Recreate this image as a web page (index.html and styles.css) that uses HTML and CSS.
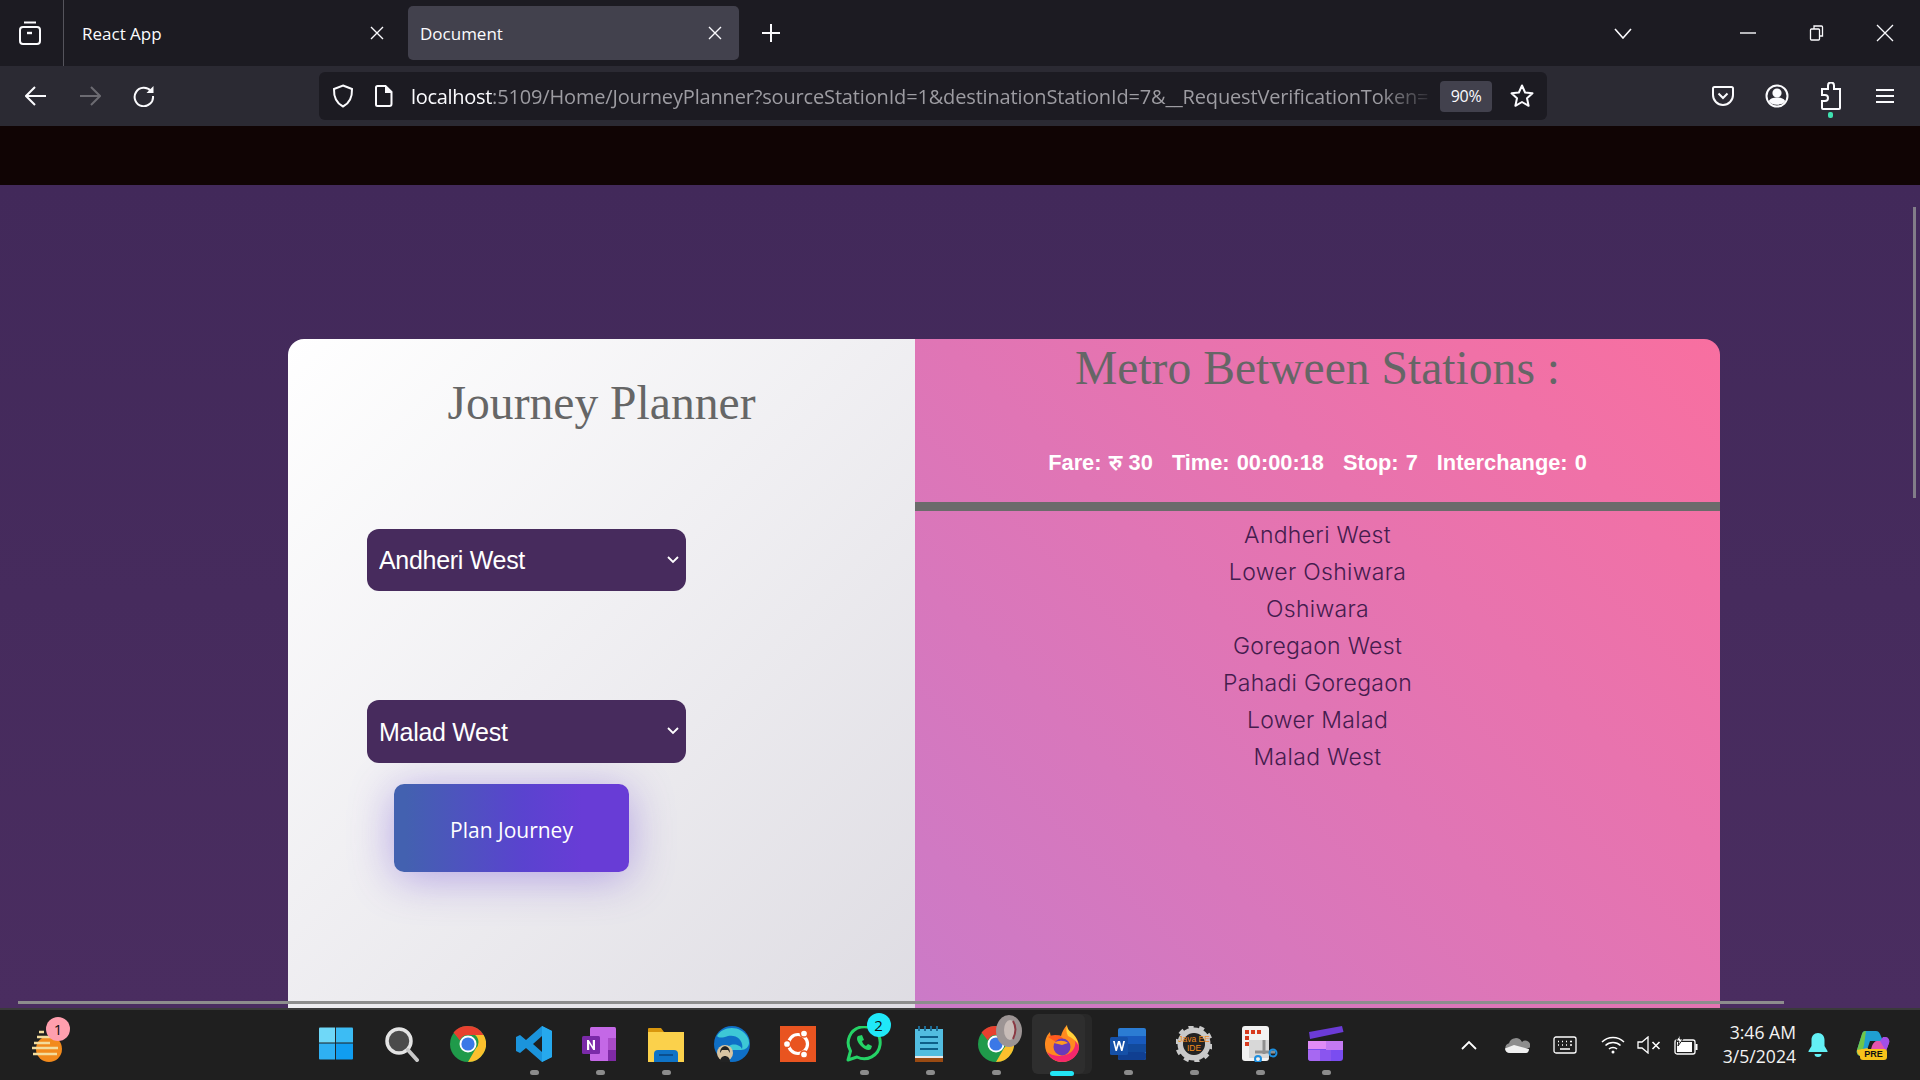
FILE: index.html
```html
<!DOCTYPE html>
<html lang="en">
<head>
    <meta charset="UTF-8">
    <title>Document</title>
    <link rel="stylesheet" href="styles.css">
</head>
<body>
    <!-- browser tabs -->
    <div class="tabstrip">
        <div class="slot tab-list">
            <svg width="24" height="26" viewBox="0 0 24 26" fill="none" stroke="#fbfbfe" stroke-width="2"><path d="M6 2.5h12"/><rect x="2" y="7" width="20" height="17" rx="3"/><path d="M9 13h5" stroke-width="2.4"/></svg>
        </div>
        <div class="tab tab-first">
            <span class="tab-title">React App</span>
            <svg class="tab-close" width="14" height="14" viewBox="0 0 14 14" stroke="#fbfbfe" stroke-width="1.4"><path d="M1 1l12 12M13 1L1 13"/></svg>
        </div>
        <div class="tab tab-active">
            <span class="tab-title">Document</span>
            <svg class="tab-close" width="14" height="14" viewBox="0 0 14 14" stroke="#fbfbfe" stroke-width="1.4"><path d="M1 1l12 12M13 1L1 13"/></svg>
        </div>
        <div class="slot new-tab">
            <svg width="18" height="18" viewBox="0 0 18 18" stroke="#fbfbfe" stroke-width="2"><path d="M9 0v18M0 9h18"/></svg>
        </div>
        <div class="slot all-tabs">
            <svg width="18" height="11" viewBox="0 0 18 11" fill="none" stroke="#fbfbfe" stroke-width="1.6"><path d="M1 1l8 9 8-9"/></svg>
        </div>
        <div class="win-btns">
            <div class="slot win-btn"><svg width="16" height="2" viewBox="0 0 16 2"><path d="M0 1h16" stroke="#fbfbfe" stroke-width="1.4"/></svg></div>
            <div class="slot win-btn"><svg width="16" height="16" viewBox="0 0 16 16" fill="none" stroke="#fbfbfe" stroke-width="1.3"><rect x="1.5" y="4" width="9" height="11" rx="1"/><path d="M5 4V1h7.5a1 1 0 0 1 1 1v9h-3"/></svg></div>
            <div class="slot win-btn"><svg width="18" height="18" viewBox="0 0 18 18" stroke="#fbfbfe" stroke-width="1.3"><path d="M1 1l16 16M17 1L1 17"/></svg></div>
        </div>
    </div>

    <!-- toolbar -->
    <div class="toolbar">
        <div class="slot nav-btn"><svg width="22" height="20" viewBox="0 0 22 20" fill="none" stroke="#fbfbfe" stroke-width="2"><path d="M21 10H2M10 1l-9 9 9 9"/></svg></div>
        <div class="slot nav-btn"><svg width="22" height="20" viewBox="0 0 22 20" fill="none" stroke="#6c6b72" stroke-width="2"><path d="M1 10h19M12 1l9 9-9 9"/></svg></div>
        <div class="slot nav-btn"><svg width="22" height="22" viewBox="0 0 22 22" fill="none" stroke="#fbfbfe" stroke-width="2"><path d="M18 6.2A9.2 9.2 0 1 0 20 11"/><path d="M20.5 1v7h-7z" fill="#fbfbfe" stroke="none"/></svg></div>
        <div class="urlbar">
            <svg class="url-shield" width="22" height="24" viewBox="0 0 22 24" fill="none" stroke="#fbfbfe" stroke-width="2"><path d="M11 1.5l9 3.5c.3 8-2 14-9 17.5C4 19 1.7 13 2 5z"/></svg>
            <svg class="url-file" width="18" height="22" viewBox="0 0 18 22" fill="none" stroke="#fbfbfe" stroke-width="2"><path d="M2.5 1h8l6 6v12a2 2 0 0 1-2 2h-12a1.500 1.500 0 0 1-1.500-1.500V2.500A1.500 1.500 0 0 1 2.500 1z"/><path d="M10 1v7h7" fill="#fbfbfe" stroke="none"/></svg>
            <div class="url-text"><span class="url-host">localhost</span>:5109/Home/JourneyPlanner?sourceStationId=1&amp;destinationStationId=7&amp;__RequestVerificationToken=</div>
            <div class="zoom-level">90%</div>
            <svg class="url-star" width="24" height="24" viewBox="0 0 24 24" fill="none" stroke="#fbfbfe" stroke-width="2" stroke-linejoin="round"><path d="M12 1.500l3.100 7 7.400.8-5.500 5 1.600 7.500-6.600-3.800-6.600 3.800 1.600-7.500-5.500-5 7.400-.8z"/></svg>
        </div>
        <div class="tool-icons">
            <div class="slot tool-btn"><svg width="22" height="22" viewBox="0 0 22 22" fill="none" stroke="#fbfbfe" stroke-width="2"><path d="M2.500 2h17A1.500 1.500 0 0 1 21 3.500V10a10 10 0 0 1-20 0V3.500A1.500 1.500 0 0 1 2.500 2z"/><path d="M6.500 8.500L11 13l4.500-4.500"/></svg></div>
            <div class="slot tool-btn"><svg width="24" height="24" viewBox="0 0 24 24" fill="none" stroke="#fbfbfe" stroke-width="2"><circle cx="12" cy="12" r="10.500"/><circle cx="12" cy="9" r="3.600" fill="#fbfbfe"/><path d="M5 17c2-3.500 12-3.500 14 0-2 3.500-12 3.500-14 0z" fill="#fbfbfe"/></svg></div>
            <div class="slot tool-btn ext-btn">
                <svg width="20" height="28" viewBox="0 0 20 28" fill="none" stroke="#fbfbfe" stroke-width="2"><path d="M7 7V3.500a3 3 0 0 1 6 0V7h6v19a1 1 0 0 1-1 1H2a1 1 0 0 1-1-1v-7h3a3 3 0 0 0 0-6H1V7z"/></svg>
                <span class="ext-dot"></span>
            </div>
            <div class="slot tool-btn"><svg width="18" height="16" viewBox="0 0 18 16" stroke="#fbfbfe" stroke-width="2"><path d="M0 2h18M0 8h18M0 14h18"/></svg></div>
        </div>
    </div>

    <div class="topband"></div>

    <!-- page -->
    <div class="page">
        <div class="card">
            <div class="planner">
                <h1 class="planner-title">Journey Planner</h1>
                <form class="planner-form">
                    <div class="select-wrap">
                        <select class="station-select"><option>Andheri West</option></select>
                        <svg class="select-arrow" width="12" height="8" viewBox="0 0 12 8" fill="none" stroke="#fff" stroke-width="1.800"><path d="M1 1l5 5 5-5"/></svg>
                    </div>
                    <div class="select-wrap select-dest">
                        <select class="station-select"><option>Malad West</option></select>
                        <svg class="select-arrow" width="12" height="8" viewBox="0 0 12 8" fill="none" stroke="#fff" stroke-width="1.800"><path d="M1 1l5 5 5-5"/></svg>
                    </div>
                    <button class="plan-btn" type="button">Plan Journey</button>
                </form>
            </div>
            <div class="result">
                <h1 class="result-title">Metro Between Stations :</h1>
                <div class="stats">
                    <span>Fare: रु 30</span>
                    <span>Time: 00:00:18</span>
                    <span>Stop: 7</span>
                    <span>Interchange: 0</span>
                </div>
                <div class="divider"></div>
                <ul class="stations">
                    <li>Andheri West</li>
                    <li>Lower Oshiwara</li>
                    <li>Oshiwara</li>
                    <li>Goregaon West</li>
                    <li>Pahadi Goregaon</li>
                    <li>Lower Malad</li>
                    <li>Malad West</li>
                </ul>
            </div>
        </div>
        <div class="hscroll"></div>
        <div class="vscroll"></div>
    </div>

    <!-- windows taskbar -->
    <div class="taskbar">
        <div class="widget">
            <svg width="40" height="44" viewBox="0 0 40 44"><circle cx="20" cy="28" r="13" fill="#f28a1c"/><path d="M8 16h14M5 22h16M3 27h26M4 33h24M10 11h5" stroke="#f3dc9c" stroke-width="2.400"/></svg>
            <span class="widget-badge">1</span>
        </div>
        <div class="task-icons">
            <div class="task-icon"><svg width="34" height="35" viewBox="0 0 36 36"><path d="M1 1h16v16H0V2a1 1 0 0 1 1-1z" fill="#6fd8f8"/><path d="M18 1h17a1 1 0 0 1 1 1v15H18z" fill="#3cbcf4"/><path d="M0 18h17v17H1a1 1 0 0 1-1-1z" fill="#2fb0f3"/><path d="M18 18h18v16a1 1 0 0 1-1 1H18z" fill="#109df0"/></svg></div>
            <div class="task-icon"><svg width="36" height="36" viewBox="0 0 36 36"><circle cx="15" cy="15" r="12" fill="#4b4b4b" stroke="#e4e4e4" stroke-width="3.500"/><path d="M24 24l9 10" stroke="#c9c9c9" stroke-width="4" stroke-linecap="round"/></svg></div>
            <div class="task-icon"><svg width="36" height="36" viewBox="0 0 36 36"><circle cx="18" cy="18" r="18" fill="#1f9a4a"/><path d="M18 0a18 18 0 0 1 15.600 9H18a9 9 0 0 0-8.200 5.300L3.500 6.500A18 18 0 0 1 18 0z" fill="#e8402f"/><path d="M33.600 9A18 18 0 0 1 18 36l7.800-13.500A9 9 0 0 0 25 9z" fill="#fbc02d"/><circle cx="18" cy="18" r="8.500" fill="#fff"/><circle cx="18" cy="18" r="6.600" fill="#3b78e7"/></svg></div>
            <div class="task-icon has-dot"><svg width="36" height="36" viewBox="0 0 36 36"><path d="M26 0l10 5v26l-10 5-16-14-6 5-4-2V11l4-2 6 5zM26 10l-9 8 9 8z" fill="#1b94dc" fill-rule="evenodd"/><path d="M26 0l10 5v26l-10 5z" fill="#26a9ee"/></svg></div>
            <div class="task-icon has-dot"><svg width="36" height="36" viewBox="0 0 36 36"><rect x="8" y="1" width="26" height="34" rx="1.500" fill="#c468e6"/><rect x="26" y="12" width="8" height="12" fill="#a94bc8"/><rect x="26" y="24" width="8" height="11" fill="#7f2aa5"/><rect x="0" y="10" width="18" height="18" rx="1.500" fill="#7a2aa8"/><path d="M5 24V14h1.800l4 6.500V14H13v10h-1.800l-4-6.500V24z" fill="#fff"/></svg></div>
            <div class="task-icon has-dot"><svg width="36" height="36" viewBox="0 0 36 36"><path d="M0 3a1 1 0 0 1 1-1h12l3 4h-16z" fill="#d9970e"/><rect x="0" y="6" width="36" height="30" fill="#fbd14b"/><path d="M6 36V28a4 4 0 0 1 4-4h16a4 4 0 0 1 4 4v8z" fill="#0f73c6"/><path d="M11 29h14" stroke="#0a4f8f" stroke-width="2"/></svg></div>
            <div class="task-icon"><svg width="36" height="36" viewBox="0 0 36 36"><circle cx="18" cy="18" r="18" fill="#0f6fc6"/><path d="M3 10C8 0 27-2 34 12c3 7-1 12-7 12H12c3-8 14-6 16-1 2-8-5-15-14-13C8 12 5 12 3 10z" fill="#3dc8d6"/><circle cx="11" cy="27" r="8" fill="#d8c4a2"/><path d="M6 36c0-8 10-8 10 0z" fill="#222"/><path d="M6 27c0-9 10-9 10 0l-2-3h-6z" fill="#222"/></svg></div>
            <div class="task-icon"><svg width="36" height="36" viewBox="0 0 36 36"><rect width="36" height="36" fill="#e95420"/><circle cx="18" cy="18" r="9.500" fill="none" stroke="#fff" stroke-width="3.200"/><circle cx="24" cy="7.500" r="3.600" fill="#fff" stroke="#e95420" stroke-width="1.500"/><circle cx="24" cy="28.500" r="3.600" fill="#fff" stroke="#e95420" stroke-width="1.500"/><circle cx="7" cy="18" r="3.600" fill="#fff" stroke="#e95420" stroke-width="1.500"/></svg></div>
            <div class="task-icon has-dot">
                <svg width="36" height="36" viewBox="0 0 36 36" fill="none"><path d="M2 34l2.500-9A16 16 0 1 1 11 31z" stroke="#25d366" stroke-width="3" stroke-linejoin="round"/><path d="M12 10c-2 2-1 6 3 10s8 5 10 3l1-3-4-2-2 2c-2-1-3-2-4-5l2-1-2-5z" fill="#25d366"/></svg>
                <span class="task-badge">2</span>
            </div>
            <div class="task-icon has-dot"><svg width="30" height="36" viewBox="0 0 30 36"><path d="M0 3h28v27H0z" fill="#52bde0"/><path d="M0 30h28v2H0z" fill="#e8e8e8"/><path d="M0 32h28v4H0z" fill="#9a4a12"/><path d="M5 11h18M5 17h18M5 23h18" stroke="#0d5f88" stroke-width="2.200"/><path d="M4 0v5M10 0v5M16 0v5M22 0v5" stroke="#1d6d96" stroke-width="2"/></svg></div>
            <div class="task-icon has-dot">
                <svg width="36" height="36" viewBox="0 0 36 36"><circle cx="18" cy="18" r="18" fill="#1f9a4a"/><path d="M18 0a18 18 0 0 1 15.600 9H18a9 9 0 0 0-8.200 5.300L3.500 6.500A18 18 0 0 1 18 0z" fill="#e8402f"/><path d="M33.600 9A18 18 0 0 1 18 36l7.800-13.500A9 9 0 0 0 25 9z" fill="#fbc02d"/><circle cx="18" cy="18" r="8.500" fill="#fff"/><circle cx="18" cy="18" r="6.600" fill="#3b78e7"/></svg>
                <svg class="avatar" width="26" height="32" viewBox="0 0 26 32"><ellipse cx="13" cy="16" rx="13" ry="16" fill="#9c9494"/><ellipse cx="14" cy="15" rx="6" ry="10" fill="#c8bcb8"/><path d="M17 6c3 5 3 12 0 18" stroke="#8a3a44" stroke-width="2" fill="none"/></svg>
            </div>
            <div class="task-icon task-active">
                <svg width="36" height="38" viewBox="0 0 36 38"><path d="M18 37A17 17 0 0 1 1 20C1 14 3 10 6 7c0 3 1 5 3 6 2-2 5-3 8-2 1-4 3-8 6-11 0 5 3 6 6 9 4 4 6 8 6 13A17 17 0 0 1 18 37z" fill="#ff8a1f"/><path d="M18 37A17 17 0 0 1 3 27c5 5 20 6 26-2 3-4 3-9 1-13 3 3 5 8 5 12A17 17 0 0 1 18 37z" fill="#f5276c"/><path d="M23 0c0 5 3 6 6 9 3 3 5 7 5 11-2-5-6-7-10-9-2-4-2-7-1-11z" fill="#ffd23a"/><path d="M4 12c5-3 13-3 16 3-4-1-6 0-8 2z" fill="#ff5a1f"/><circle cx="18" cy="22" r="8.500" fill="#6a3ab8"/><path d="M10 18c4-3 10-3 14 0l-6 2z" fill="#ff9a1f"/></svg>
                <span class="active-bar"></span>
            </div>
            <div class="task-icon has-dot"><svg width="36" height="36" viewBox="0 0 36 36"><rect x="8" y="2" width="28" height="32" rx="2" fill="#2b7cd3"/><rect x="8" y="10" width="28" height="8" fill="#185abd"/><rect x="8" y="18" width="28" height="8" fill="#124a9c"/><rect x="8" y="26" width="28" height="8" rx="2" fill="#103f91"/><rect x="0" y="11" width="18" height="18" rx="1.500" fill="#1550a8"/><path d="M3 15l2.500 10h1.400L9 18l2.100 7h1.400L15 15h-1.800l-1.300 6.500L10 15H8l-1.900 6.500L4.800 15z" fill="#fff"/></svg></div>
            <div class="task-icon has-dot">
                <svg width="36" height="36" viewBox="0 0 36 36"><circle cx="18" cy="18" r="13.500" fill="none" stroke="#c9c9c9" stroke-width="6"/><circle cx="18" cy="18" r="17" fill="none" stroke="#c9c9c9" stroke-width="4" stroke-dasharray="5 5.600"/><circle cx="18" cy="18" r="11" fill="#222"/><text class="java-label" x="18" y="16" text-anchor="middle">Java EE</text><text class="java-label" x="18" y="25" text-anchor="middle">IDE</text></svg>
            </div>
            <div class="task-icon has-dot"><svg width="36" height="36" viewBox="0 0 36 36"><rect x="0" y="0" width="27" height="35" rx="3" fill="#f2f2f2"/><path d="M3 4h4v4H3zM9 4h4v4H9zM15 4h4v4h-4zM3 10h4v4H3zM3 16h4v4H3z" fill="#d83b1f"/><rect x="7" y="14" width="20" height="18" fill="#d8d8d8"/><path d="M22 14v14M13 26h20" stroke="#8f8f8f" stroke-width="3"/><circle cx="31" cy="27" r="3.500" fill="none" stroke="#1d8fe0" stroke-width="2"/><circle cx="16" cy="33" r="3" fill="none" stroke="#1d8fe0" stroke-width="2"/></svg></div>
            <div class="task-icon has-dot"><svg width="36" height="36" viewBox="0 0 36 36"><path d="M1 6l33-6 1.500 6L2 13z" fill="#6b3bd6"/><path d="M0 15h35v17a3 3 0 0 1-3 3H3a3 3 0 0 1-3-3z" fill="#7a4df0"/><path d="M0 15h18v8h-8v-0H0z" fill="#e08cf6"/><path d="M18 15h17v9H18z" fill="#c47af2"/><path d="M0 24h12v11H3a3 3 0 0 1-3-3z" fill="#a768f2"/><path d="M12 24h11v11H12z" fill="#8a55ef"/></svg></div>
        </div>
        <div class="tray">
            <div class="tray-icon tray-chevron"><svg width="16" height="10" viewBox="0 0 16 10" fill="none" stroke="#fff" stroke-width="1.800"><path d="M1 9l7-7 7 7"/></svg></div>
            <div class="tray-icon tray-cloud"><svg width="25" height="16" viewBox="0 0 25 16"><path d="M5 16a5 5 0 0 1-1-9.800A7 7 0 0 1 17 5a5 5 0 0 1 8 5.500z" fill="#8d8d8d"/><path d="M5 16c-3 0-5-2-5-4.500L9 8l15 4c0 2-1 4-3 4z" fill="#f0f0f0"/></svg></div>
            <div class="tray-icon tray-kbd"><svg width="24" height="18" viewBox="0 0 24 18" fill="none" stroke="#fff" stroke-width="1.300"><rect x="1" y="1" width="22" height="16" rx="2"/><path d="M5 5.500h1M9 5.500h1M13 5.500h1M17 5.500h2M5 9h1M9 9h1M13 9h1M17 9h2M7 13h10" stroke-width="1.600"/></svg></div>
            <div class="tray-icon tray-wifi"><svg width="24" height="18" viewBox="0 0 24 18" fill="none" stroke="#fff" stroke-width="1.500"><path d="M1 6c6-6 16-6 22 0M4.500 9.500c4-4 11-4 15 0M8 13c2-2 6-2 8 0"/><circle cx="12" cy="16" r="1.500" fill="#fff" stroke="none"/></svg></div>
            <div class="tray-icon tray-sound"><svg width="24" height="18" viewBox="0 0 24 18" fill="none" stroke="#fff" stroke-width="1.300"><path d="M1 6v6h4l6 5V1L5 6z"/><path d="M15.500 6l7 7M22.500 6l-7 7" stroke-width="1.600"/></svg></div>
            <div class="tray-icon tray-batt"><svg width="25" height="20" viewBox="0 0 25 20" fill="none" stroke="#fff" stroke-width="1.300"><rect x="1" y="5" width="20" height="14" rx="2"/><path d="M3 17V7h15v10z" fill="#fff" stroke="none"/><path d="M21.500 9h2v6h-2z" fill="#fff" stroke="none"/><path d="M6 0L2 6h3l-1 5 5-7H6z" fill="#fff" stroke="#202020" stroke-width="1"/></svg></div>
            <div class="clock"><div>3:46 AM</div><div>3/5/2024</div></div>
            <div class="tray-icon tray-bell"><svg width="20" height="24" viewBox="0 0 20 24"><path d="M10 0c4 0 6.500 3 6.500 7v6l3 5v1H.5v-1l3-5V7C3.500 3 6 0 10 0z" fill="#63f0f5"/><path d="M6.500 21h7a3.500 3 0 0 1-7 0z" fill="#63f0f5"/></svg></div>
            <div class="tray-icon tray-copilot">
                <svg width="34" height="30" viewBox="0 0 34 30"><path d="M9 1h11c2 0 3 1 4 3l3 7H14L9 26H5c-3 0-5-3-4-6L6 4c.5-2 1.500-3 3-3z" fill="#1f9fd0"/><path d="M1 20L6 4c.5-2 2-3 4-3l-2 14-3 11c-3 0-5-3-4-6z" fill="#6fc64a"/><path d="M1 20c0 3 2 6 4 6h4l3-8z" fill="#f4c22b"/><path d="M27 7h2c3 0 5 3 4 6l-5 13c-1 2-2 3-4 3H12l4-13c1-3 3-5 5-5h6z" fill="#e455b0"/><path d="M27 7h2c3 0 5 3 4 6l-3 8-6-10z" fill="#a24fe8"/></svg>
                <span class="pre-badge">PRE</span>
            </div>
        </div>
    </div>
</body>
</html>
```

FILE: styles.css
```css
* {
    margin: 0;
    padding: 0;
    box-sizing: border-box;
}

body {
    width: 1920px;
    height: 1080px;
    overflow: hidden;
    font-family: "Open Sans", sans-serif;
    background-color: #1c1b22;
}

.slot {
    display: flex;
    align-items: center;
    justify-content: center;
}

/* tab strip */
.tabstrip {
    display: flex;
    align-items: center;
    height: 66px;
    background-color: #1c1b22;
    color: #fbfbfe;
}

.tab-list {
    width: 64px;
    height: 66px;
    padding-right: 4px;
    border-right: 1px solid #55545c;
}

.tab {
    display: flex;
    align-items: center;
    justify-content: space-between;
    width: 331px;
    height: 54px;
    padding: 0 17px 0 18px;
}

.tab-first {
    padding-right: 11px;
}

.tab-active {
    margin-left: 13px;
    padding-left: 12px;
    background-color: #42414d;
    border-radius: 5px;
}

.tab-title {
    font-size: 17px;
}

.new-tab {
    width: 64px;
}

.all-tabs {
    width: 18px;
    margin-left: 811px;
}

.win-btns {
    display: flex;
    margin-left: 82px;
}

.win-btn {
    width: 68.5px;
}

/* toolbar */
.toolbar {
    display: flex;
    align-items: center;
    height: 60px;
    padding-left: 9px;
    background-color: #2b2a33;
}

.nav-btn {
    width: 54px;
}

.urlbar {
    display: flex;
    align-items: center;
    width: 1228px;
    height: 48px;
    margin-left: 148px;
    padding-left: 13px;
    background-color: #1c1b22;
    border-radius: 6px;
    position: relative;
}

.url-file {
    margin-left: 21px;
}

.url-text {
    width: 1018px;
    margin-left: 18px;
    font-size: 20px;
    color: #9d9ca2;
    white-space: nowrap;
    overflow: hidden;
    letter-spacing: -0.16px;
    -webkit-mask-image: linear-gradient(90deg, #000 95%, rgba(0, 0, 0, 0.15));
    mask-image: linear-gradient(90deg, #000 95%, rgba(0, 0, 0, 0.15));
}

.url-host {
    color: #fbfbfe;
    letter-spacing: -0.3px;
}

.zoom-level {
    width: 52px;
    height: 31px;
    margin-left: 11px;
    line-height: 31px;
    text-align: center;
    font-size: 16px;
    letter-spacing: -0.3px;
    color: #fbfbfe;
    background-color: #42414d;
    border-radius: 4px;
}

.url-star {
    margin-left: 18px;
}

.tool-icons {
    display: flex;
    margin-left: 149px;
}

.tool-btn {
    width: 54px;
    position: relative;
}

.ext-dot {
    position: absolute;
    left: 24px;
    top: 30px;
    width: 5px;
    height: 6px;
    background-color: #3fe1b0;
    border-radius: 2px;
}

.topband {
    height: 59px;
    background-color: #100404;
}

/* page */
.page {
    position: relative;
    height: 823px;
    padding: 154px 200px 0 288px;
    overflow: hidden;
    background: linear-gradient(180deg, #42295a, #4a2d60);
}

.card {
    display: flex;
    width: 1432px;
    height: 760px;
    border-radius: 16px;
    overflow: hidden;
}

.planner {
    width: 627px;
    padding-top: 34px;
    background: linear-gradient(135deg, #ffffff, #dcdae1);
}

.planner-title {
    font-family: "Liberation Serif", serif;
    font-size: 47.6px;
    font-weight: normal;
    line-height: 60px;
    text-align: center;
    color: #666;
}

.planner-form {
    padding: 96px 0 0 79px;
}

.select-wrap {
    position: relative;
    width: 319px;
}

.select-dest {
    margin-top: 109px;
}

.station-select {
    display: block;
    width: 100%;
    height: 62px;
    padding-left: 12px;
    appearance: none;
    border: none;
    border-radius: 12px;
    font-family: "Liberation Sans", sans-serif;
    font-size: 25px;
    letter-spacing: -0.3px;
    color: #fff;
    background-color: #472b5d;
}

.select-dest .station-select {
    height: 63px;
}

.select-arrow {
    position: absolute;
    right: 7px;
    top: 27px;
}

.plan-btn {
    display: block;
    width: 235px;
    height: 88px;
    margin: 21px 0 0 27px;
    padding-top: 4px;
    border: none;
    border-radius: 10px;
    font-family: "Open Sans", sans-serif;
    font-size: 21px;
    color: #fff;
    background: linear-gradient(90deg, #4361b0 5%, #5a43cf 55%, #683cd6 80%);
    box-shadow: 0 6px 44px rgba(103, 61, 212, 0.42);
}

.result {
    flex: 1;
    text-align: center;
    background: linear-gradient(225deg, #f86fa0, #c87bca);
}

.result-title {
    font-family: "Liberation Serif", serif;
    font-size: 47.6px;
    font-weight: normal;
    line-height: 58px;
    color: #666;
}

.stats {
    display: flex;
    justify-content: center;
    gap: 19px;
    margin-top: 51px;
    font-family: "Liberation Sans", sans-serif;
    font-size: 21.800px;
    font-weight: bold;
    line-height: 30px;
    word-spacing: 1px;
    color: #fff;
}

.divider {
    height: 9px;
    margin-top: 24px;
    background-color: #6b6b6b;
}

.stations {
    margin-top: 6px;
    list-style: none;
    font-family: "Inter", sans-serif;
    font-size: 23px;
    font-weight: 300;
    letter-spacing: 0.3px;
    line-height: 37px;
    color: #451c4e;
}

.hscroll {
    position: absolute;
    left: 18px;
    top: 816px;
    width: 1766px;
    height: 3px;
    background-color: #8d8d8d;
}

.vscroll {
    position: absolute;
    right: 4px;
    top: 22px;
    width: 3.500px;
    height: 291px;
    background-color: #827d89;
}

/* taskbar */
.taskbar {
    display: flex;
    align-items: center;
    position: relative;
    height: 72px;
    border-top: 2px solid #3a3a3a;
    background-color: #1f1f1f;
}

.widget {
    position: relative;
    width: 302.500px;
    padding: 0 0 4px 29px;
}

.widget svg {
    display: block;
}

.widget-badge {
    position: absolute;
    left: 46px;
    top: -4px;
    width: 24px;
    height: 24px;
    line-height: 24px;
    text-align: center;
    font-size: 15px;
    color: #111;
    background-color: #ff9fae;
    border-radius: 50%;
}

.task-icons {
    display: flex;
}

.task-icon {
    display: flex;
    align-items: center;
    justify-content: center;
    position: relative;
    width: 66px;
    height: 70px;
    padding-bottom: 3px;
}

.has-dot::after {
    content: "";
    position: absolute;
    left: 29px;
    bottom: 5px;
    width: 9px;
    height: 5px;
    background-color: #8c8c8c;
    border-radius: 3px;
}

.task-badge {
    position: absolute;
    left: 36px;
    top: 3px;
    width: 24px;
    height: 24px;
    line-height: 24px;
    text-align: center;
    font-size: 15px;
    color: #111;
    background-color: #20e8f8;
    border-radius: 50%;
}

.avatar {
    position: absolute;
    left: 33px;
    top: 5px;
}

.task-active::before {
    content: "";
    position: absolute;
    left: 3px;
    top: 4px;
    width: 53px;
    height: 60px;
    background-color: #2e2e2e;
    border-radius: 6px;
    box-shadow: 7px 0 0 #282828;
}

.task-active svg {
    position: relative;
}

.active-bar {
    position: absolute;
    left: 21px;
    bottom: 4px;
    width: 24px;
    height: 5px;
    background-color: #22e4f4;
    border-radius: 3px;
}

.java-label {
    font-family: "Liberation Sans", sans-serif;
    font-size: 8.500px;
    fill: #f08a1c;
}

.tray {
    display: flex;
    align-items: center;
    position: absolute;
    right: 0;
    top: 0;
    height: 70px;
}

.tray-icon {
    display: flex;
    align-items: center;
    justify-content: center;
    position: relative;
}

.tray-chevron,
.tray-cloud,
.tray-kbd,
.tray-wifi {
    width: 48px;
}

.tray-sound {
    width: 24px;
}

.tray-batt {
    width: 50px;
}

.clock {
    width: 85px;
    padding-bottom: 2px;
    text-align: right;
    font-family: "Open Sans", sans-serif;
    font-size: 17.600px;
    line-height: 24px;
    color: #f2f2f2;
}

.tray-bell {
    width: 44px;
}

.tray-copilot {
    width: 66px;
    margin-right: 14px;
}

.pre-badge {
    position: absolute;
    left: 20px;
    top: 19px;
    width: 27px;
    height: 11px;
    line-height: 11px;
    text-align: center;
    font-family: "Liberation Sans", sans-serif;
    font-size: 9px;
    font-weight: bold;
    color: #111;
    background-color: #f8c31a;
    border-radius: 3px;
}
```
